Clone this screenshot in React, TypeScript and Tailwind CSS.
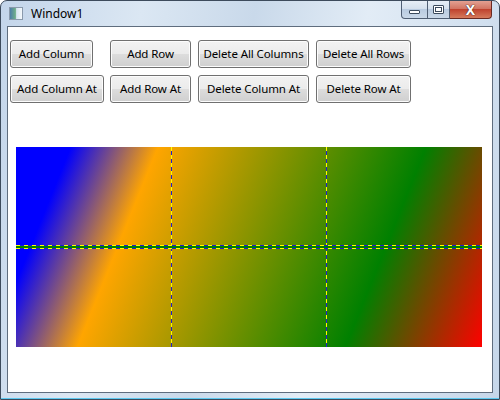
const font = { fontFamily: '"Noto Sans", "Open Sans", sans-serif' }

function VistaButton({ label, width }: { label: string; width: string }) {
  return (
    <button
      className={`${width} h-[28px] rounded-[3px] border border-[#707070] bg-[linear-gradient(to_bottom,#f2f2f2_0%,#ebebeb_50%,#dddddd_50%,#cfcfcf_100%)] shadow-[inset_0_0_0_1px_#fcfcfc] text-[11.5px] tracking-[-0.1px] text-black leading-none`}
    >
      {label}
    </button>
  )
}

function GridLineV({ left }: { left: string }) {
  return (
    <div
      className={`absolute top-0 bottom-0 ${left} w-[1px] bg-[repeating-linear-gradient(to_bottom,#ffff00_0px,#ffff00_4px,#1f1fd0_4px,#1f1fd0_8px)]`}
    />
  )
}

export default function App() {
  return (
    <div
      className="relative w-[500px] h-[400px] overflow-hidden rounded-t-[7px] border border-[#3d4b5c] bg-[linear-gradient(100deg,#c3d5ea_0%,#dbe7f3_25%,#c9d9ea_45%,#e2ecf6_65%,#c6d7ea_100%)]"
      style={font}
    >
      {/* title bar */}
      <div className="flex h-[25px] items-start justify-between">
        <div className="flex items-center gap-[8px] pl-[8px] pt-[6px]">
          <div className="h-[13px] w-[14px] border border-[#8a9aac] bg-[linear-gradient(to_right,#4d7ea8_0%,#6fae8a_45%,#d8e6f2_55%,#f4f8fb_100%)]" />
          <span className="text-[12px] text-black leading-none">Window1</span>
        </div>
        <div className="mr-[7px] flex h-[18px]">
          <div className="flex w-[27px] items-center justify-center rounded-bl-[4px] border border-t-0 border-[#4f5e73] bg-[linear-gradient(to_bottom,#e7eef6_0%,#d3dfec_50%,#b9cbe0_50%,#c9d8e8_100%)]">
            <div className="mt-[4px] h-[4px] w-[11px] rounded-[1px] border border-[#3b4a5c] bg-white" />
          </div>
          <div className="flex w-[22px] items-center justify-center border border-t-0 border-l-0 border-[#4f5e73] bg-[linear-gradient(to_bottom,#e7eef6_0%,#d3dfec_50%,#b9cbe0_50%,#c9d8e8_100%)]">
            <div className="h-[9px] w-[11px] rounded-[1px] border border-[#3b4a5c] bg-white p-[1px]">
              <div className="h-full w-full border border-[#3b4a5c]" />
            </div>
          </div>
          <div className="flex w-[42px] items-center justify-center rounded-br-[4px] border border-t-0 border-l-0 border-[#6b2a22] bg-[linear-gradient(to_bottom,#e3a092_0%,#d0705e_50%,#c0432f_50%,#d67a5c_100%)]">
            <span className="text-[14px] font-bold leading-none text-white [text-shadow:0_0_1px_#3a1a14,0_0_1px_#3a1a14]">
              X
            </span>
          </div>
        </div>
      </div>

      {/* client area */}
      <div className="mx-[6px] h-[367px] border border-[#5f6d7e] bg-white">
        <div className="grid grid-cols-[100px_88px_118px_96px] gap-y-[7px] pl-[2px] pt-[13px]">
          <VistaButton label="Add Column" width="w-[83px]" />
          <VistaButton label="Add Row" width="w-[81px]" />
          <VistaButton label="Delete All Columns" width="w-[111px]" />
          <VistaButton label="Delete All Rows" width="w-[95px]" />
          <VistaButton label="Add Column At" width="w-[94px]" />
          <VistaButton label="Add Row At" width="w-[81px]" />
          <VistaButton label="Delete Column At" width="w-[111px]" />
          <VistaButton label="Delete Row At" width="w-[95px]" />
        </div>

        <div className="relative ml-[8px] mt-[44px] h-[200px] w-[466px] bg-[linear-gradient(112deg,#0000ff_10%,#ffa500_26%,#008000_75%,#ff0000_100%)]">
          <GridLineV left="left-[155px]" />
          <GridLineV left="left-[310px]" />
          <div className="absolute left-0 right-0 top-[98px] flex flex-col">
            <div className="h-[1px] bg-[repeating-linear-gradient(to_right,#ffff00_0px,#ffff00_4px,#1f1fd0_4px,#1f1fd0_8px)]" />
            <div className="h-[2px] bg-[#008000]" />
            <div className="h-[1px] bg-[repeating-linear-gradient(to_right,#ffff00_0px,#ffff00_4px,#1f1fd0_4px,#1f1fd0_8px)]" />
          </div>
        </div>
      </div>
      <div className="absolute bottom-0 left-0 right-0 h-[1px] bg-[#5cc8ef]" />
    </div>
  )
}
